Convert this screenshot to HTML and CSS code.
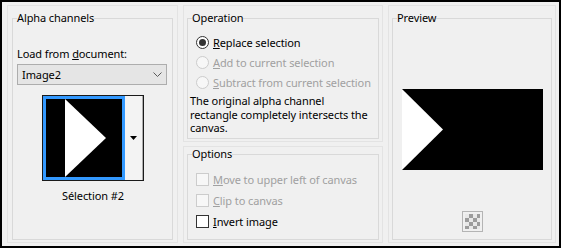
FILE: index.html
```html
<!DOCTYPE html>
<html lang="en">
<head>
    <meta charset="UTF-8">
    <title>Load Selection From Alpha Channel</title>
    <link rel="stylesheet" href="styles.css">
</head>
<body>
    <div class="dialog">
        <div class="panel panel-alpha">
            <fieldset class="group">
                <legend>Alpha channels</legend>
                <div class="field-label">Load from <u>d</u>ocument:</div>
                <div class="combo">
                    <span>Image2</span>
                    <svg class="combo-chevron" width="9" height="5" viewBox="0 0 9 5">
                        <polyline points="0.5,0.5 4.5,4.5 8.5,0.5" fill="none" stroke="#5a5a5a" stroke-width="1"/>
                    </svg>
                </div>
                <div class="thumb-picker">
                    <div class="thumb">
                        <svg width="76" height="78" viewBox="0 0 76 78">
                            <rect width="76" height="78" fill="#000"/>
                            <polygon points="19,0 60,39 19,78" fill="#fff"/>
                        </svg>
                    </div>
                    <div class="thumb-drop">
                        <svg width="7" height="4" viewBox="0 0 7 4">
                            <polygon points="0,0 7,0 3.5,4" fill="#000"/>
                        </svg>
                    </div>
                </div>
                <div class="thumb-caption">Sélection #2</div>
            </fieldset>
        </div>

        <div class="col-mid">
            <div class="panel panel-op">
                <fieldset class="group">
                    <legend>Operation</legend>
                    <div class="option-list">
                        <div class="radio-row">
                            <span class="radio checked"></span>
                            <span><u>R</u>eplace selection</span>
                        </div>
                        <div class="radio-row disabled">
                            <span class="radio"></span>
                            <span><u>A</u>dd to current selection</span>
                        </div>
                        <div class="radio-row disabled">
                            <span class="radio"></span>
                            <span><u>S</u>ubtract from current selection</span>
                        </div>
                    </div>
                    <p class="note">The original alpha channel<br>rectangle completely intersects the<br>canvas.</p>
                </fieldset>
            </div>
            <div class="panel panel-opt">
                <fieldset class="group">
                    <legend>Options</legend>
                    <div class="option-list checks">
                        <div class="check-row disabled">
                            <span class="check"></span>
                            <span><u>M</u>ove to upper left of canvas</span>
                        </div>
                        <div class="check-row disabled">
                            <span class="check"></span>
                            <span><u>C</u>lip to canvas</span>
                        </div>
                        <div class="check-row">
                            <span class="check"></span>
                            <span><u>I</u>nvert image</span>
                        </div>
                    </div>
                </fieldset>
            </div>
        </div>

        <div class="panel panel-preview">
            <fieldset class="group">
                <legend>Preview</legend>
                <div class="preview-image">
                    <svg width="141" height="81" viewBox="0 0 141 81">
                        <rect width="141" height="81" fill="#000"/>
                        <polygon points="0,0 41,40.5 0,81" fill="#fff"/>
                    </svg>
                </div>
                <div class="checker-btn"><span class="checker"></span></div>
            </fieldset>
        </div>
    </div>
</body>
</html>
```

FILE: styles.css
```css
body {
    margin: 0;
    background-color: #fff;
    font-family: 'Noto Sans', 'Open Sans', sans-serif;
    font-size: 11px;
    letter-spacing: -0.1px;
    color: #000;
}
.dialog {
    box-sizing: border-box;
    width: 561px;
    height: 248px;
    border: 2px solid #000;
    background-color: #f0f0f0;
    padding: 3px 3px 3px 5px;
    display: flex;
    gap: 5px;
}
.panel {
    box-sizing: border-box;
    border: 1px solid #e3e3e3;
    display: flex;
    flex-direction: column;
}
.panel-alpha {
    width: 171px;
    padding: 5px 4px 2px 4px;
}
.col-mid {
    width: 200px;
    display: flex;
    flex-direction: column;
    gap: 4px;
}
.panel-op {
    height: 137px;
    padding: 5px 3px 2px 3px;
}
.panel-opt {
    flex: 1;
    padding: 0 3px 2px 3px;
}
.panel-preview {
    width: 168px;
    padding: 5px 3px 2px 3px;
}
.group {
    flex: 1;
    margin: 0;
    padding: 0 3px 0 4px;
    border: 1px solid #d9d9d9;
    min-width: 0;
}
.group legend {
    padding: 0;
    line-height: 14px;
}

/* Alpha channels */
.field-label {
    margin-top: 21px;
    line-height: 16px;
}
.combo {
    box-sizing: border-box;
    width: 150px;
    height: 21px;
    margin-top: 2px;
    border: 1px solid #adadad;
    background-color: #e5e5e5;
    padding: 0 4px;
    display: flex;
    align-items: center;
    justify-content: space-between;
}
.thumb-picker {
    box-sizing: border-box;
    width: 102px;
    height: 86px;
    margin: 10px auto 0;
    border: 1px solid #1a1a1a;
    display: flex;
}
.thumb {
    border: 3px solid #3399ff;
    width: 76px;
    height: 78px;
    line-height: 0;
}
.thumb-drop {
    flex: 1;
    border-right: 1px solid #adadad;
    background-color: #f3f3f3;
    display: flex;
    align-items: center;
    justify-content: center;
}
.thumb-caption {
    margin-top: 7px;
    line-height: 16px;
    text-align: center;
}

/* Operation / Options */
.option-list {
    margin-top: 7px;
}
.option-list.checks {
    margin-top: 8px;
}
.radio-row, .check-row {
    height: 20px;
    display: flex;
    align-items: center;
    gap: 4px;
    padding-left: 4px;
    white-space: nowrap;
}
.check-row {
    height: 21px;
}
.radio {
    box-sizing: border-box;
    width: 13px;
    height: 13px;
    border: 1px solid #333;
    border-radius: 50%;
    background-color: #fff;
    display: flex;
    align-items: center;
    justify-content: center;
    flex-shrink: 0;
}
.radio.checked::after {
    content: "";
    width: 7px;
    height: 7px;
    border-radius: 50%;
    background-color: #333;
}
.check {
    box-sizing: border-box;
    width: 13px;
    height: 13px;
    border: 1px solid #333;
    background-color: #fff;
    flex-shrink: 0;
}
.disabled {
    color: #a0a0a0;
}
.disabled .radio, .disabled .check {
    border-color: #cccccc;
    background-color: #f7f7f7;
}
.note {
    margin: 2px 0 0 -2px;
    line-height: 13.5px;
    white-space: nowrap;
}

/* Preview */
.preview-image {
    margin-top: 64px;
    display: flex;
    justify-content: center;
    line-height: 0;
}
.checker-btn {
    box-sizing: border-box;
    width: 21px;
    height: 21px;
    margin: 41px auto 0;
    border: 1px solid #b4b4b4;
    padding: 2px;
}
.checker {
    display: block;
    width: 15px;
    height: 15px;
    background: repeating-conic-gradient(#9c9c9c 0 25%, #e8e8e8 0 50%) 0 0 / 8px 8px;
}
```
